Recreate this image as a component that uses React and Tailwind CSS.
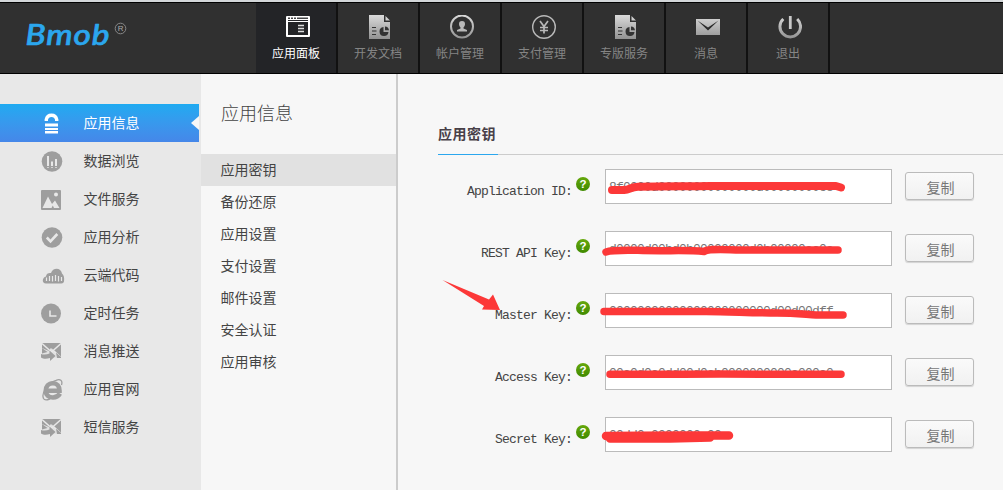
import React from "react";

const CJK = "font-['Liberation_Sans','Noto_Sans_CJK_SC',sans-serif]";

function MetalDefs() {
  return (
    <svg width="0" height="0" className="absolute">
      <defs>
        <linearGradient id="metal" x1="0" y1="0" x2="0" y2="24" gradientUnits="userSpaceOnUse">
          <stop offset="0" stopColor="#dadada" />
          <stop offset="1" stopColor="#929292" />
        </linearGradient>
        <linearGradient id="help" x1="0" y1="0" x2="0" y2="1">
          <stop offset="0" stopColor="#66a80c" />
          <stop offset="1" stopColor="#3f8a00" />
        </linearGradient>
      </defs>
    </svg>
  );
}

const navIcons = {
  panel: (
    <g>
      <path fill="#fff" fillRule="evenodd" d="M1 1H23Q24 1 24 2V21Q24 22 23 22H1Q0 22 0 21V2Q0 1 1 1ZM2 7V20H22V7Z" />
      <path stroke="#232427" strokeWidth="1" d="M2 5.5H22" />
      <path fill="#232427" d="M2 2.500H4V4H2ZM5 2.500H7V4H5ZM8 2.500H10V4H8ZM11 2.500H22V4H11Z" opacity=".85" />
      <path stroke="#ddd" strokeWidth="1.5" d="M12 10.5H18M12 13.5H18M12 16.5H18" />
    </g>
  ),
  doc: (
    <g>
      <path fill="url(#metal)" d="M1 0H16V7H22V24H1Z" />
      <path fill="url(#metal)" d="M17.5 1L22 5.500H17.500Z" />
      <path stroke="#333" strokeWidth="1.2" d="M4 12.5H8M4 16H8.500M4 19.500H8" />
      <path fill="#333" d="M15.500 12A4.500 4.500 0 1 0 20.500 17H15.500Z" />
      <path fill="#333" d="M17 11.500A4.300 4.300 0 0 1 21 15.200H17Z" />
    </g>
  ),
  user: (
    <g>
      <circle cx="12" cy="11.500" r="11" fill="none" stroke="url(#metal)" strokeWidth="2" />
      <path fill="#b8b8b8" d="M12 6C14.200 6 15 7.300 15 9C15 10.500 14.300 11.500 13.500 12.500V13.500L17 15V16.500H7V15L10.500 13.500V12.500C9.700 11.500 9 10.500 9 9C9 7.300 9.800 6 12 6Z" />
    </g>
  ),
  yen: (
    <g fill="none" stroke="#b9b9b9">
      <circle cx="12" cy="12" r="11.300" strokeWidth="1.4" />
      <path strokeWidth="1.700" d="M8 6L12 11.500L16 6M12 11V18.500M8 12.500H16M8 15.500H16" />
    </g>
  ),
  mail: (
    <g>
      <path fill="url(#metal)" d="M0 4H24V20H0Z" />
      <path fill="#2b2b2b" d="M1.500 5.500L12 12.500L22.500 5.500L12 15.500Z" />
    </g>
  ),
  power: (
    <g fill="none" stroke="url(#metal)">
      <path strokeWidth="3" d="M5.300 4A10.300 10.300 0 1 0 19.200 4" />
      <path stroke="#c9c9c9" strokeWidth="2.800" d="M12.300 1V14" />
    </g>
  ),
};

const nav = [
  ["panel", "应用面板"],
  ["doc", "开发文档"],
  ["user", "帐户管理"],
  ["yen", "支付管理"],
  ["doc", "专版服务"],
  ["mail", "消息"],
  ["power", "退出"],
];

const mailSend = (
  <g>
    <path fill="#9e9e9e" d="M2 3H21V18H2Z" />
    <path fill="none" stroke="#e8e8e8" strokeWidth="1.500" d="M2 3.500L11.500 12L21 3.500M14 11L20.500 17" />
    <path fill="#e8e8e8" d="M0 8H2L10 11.500V8.500L12 8.500L17.500 15L21 18.500V24H0Z" opacity=".9" />
    <path fill="#9e9e9e" d="M2 8L7.500 12L2 13.500ZM16 12.500L21 17V18H17Z" />
    <path fill="#9e9e9e" d="M1 14C4 15 7 14.500 9.500 13.500V10.500L15.500 16L10 21V18C6.500 19.300 3 19 1 17.500Z" />
  </g>
);

const sideIcons = {
  lock: (
    <g>
      <path fill="none" stroke="#fff" strokeWidth="3.400" d="M6.300 9V7.500A5.300 5.300 0 0 1 16.700 7.500V9" />
      <path fill="#fff" d="M5 11.500H18V14.500H5ZM5 16H18V18H5ZM5 19H18V21.500H5Z" />
    </g>
  ),
  chart: (
    <g>
      <circle cx="12" cy="11.500" r="10.300" fill="#9e9e9e" />
      <path stroke="#e8e8e8" strokeWidth="2" d="M8 6V16M12 11.500V16M16 9V16" />
      <path stroke="#d0d0d0" strokeWidth="1" d="M7 17.500H9M11 17.500H13M15 17.500H17" />
    </g>
  ),
  image: (
    <g>
      <rect x="1" y="2" width="20" height="20" rx="1" fill="#9e9e9e" />
      <path fill="#e8e8e8" d="M2.500 20L8 8.500L12 16L15 12.500L19.500 20H14L12.800 17.500L11.500 20Z" />
      <circle cx="16" cy="6.500" r="2" fill="#e8e8e8" />
    </g>
  ),
  check: (
    <g>
      <circle cx="12" cy="11.500" r="10.300" fill="#9e9e9e" />
      <path fill="none" stroke="#e8e8e8" strokeWidth="2.600" d="M6.800 11.500L10.500 15.300L17.300 8" />
    </g>
  ),
  cloud: (
    <g>
      <path fill="#9e9e9e" d="M6 19.500C1.500 19.500 2 13.500 6 12.500C6 9.500 9 8.500 11 9C12.500 3.500 21 3 22 9.500C24 11 24.500 14 24 17.500Q23.500 19.500 21.500 19.500Z" />
      <path stroke="#e8e8e8" strokeWidth="1.200" d="M6.500 13.500V17M9.500 12V17M12.500 12V17.500M15.500 11V17M18.500 12V17.500M21.500 13V17" />
    </g>
  ),
  clock: (
    <g>
      <circle cx="11" cy="11.500" r="10" fill="#9e9e9e" />
      <path fill="none" stroke="#e8e8e8" strokeWidth="1.600" d="M10 8.500V14H16.500" />
    </g>
  ),
  send: mailSend,
  ie: (
    <g>
      <path fill="none" stroke="#9e9e9e" strokeWidth="4.600" d="M6 12.800H19.500C19.500 8 17 5.200 13 5.200C8.500 5.200 5.800 8.500 5.800 12.800C5.800 17.200 8.800 19.500 13 19.500C16 19.500 18.500 18 20 15.500" />
      <path fill="none" stroke="#9e9e9e" strokeWidth="1.300" d="M21.500 7C23 2 20 .8 16 2.300C8 5 1 15 3.500 20.500C4.500 22.500 7.500 22 10 20.800" />
    </g>
  ),
};

const side = [
  ["lock", "应用信息"],
  ["chart", "数据浏览"],
  ["image", "文件服务"],
  ["check", "应用分析"],
  ["cloud", "云端代码"],
  ["clock", "定时任务"],
  ["send", "消息推送"],
  ["ie", "应用官网"],
  ["send", "短信服务"],
];

const submenu = ["应用密钥", "备份还原", "应用设置", "支付设置", "邮件设置", "安全认证", "应用审核"];

/* Marker strokes are in the coordinates of the 300x36 field overlay. */
const fields = [
  { label: "Application ID:", value: "8f0000d00000000000000d00000000c8", w: 8, d: "M12 21H24C30 20.500 31 18 38 17.800C64 17 90 17.500 110 17H236L241 18.500" },
  { label: "REST API Key:", value: "d0000d00bd0b00000000d0b00000ac0a", w: 7.500, d: "M6 21C12 19 20 19.500 38 19.300C65 20.500 85 18.500 104 20.500C109 17.500 120 18.500 140 19H238" },
  { label: "Master Key:", value: "00000000000000000000000d00d00dff", w: 7.500, d: "M4 18.500H106C130 18.500 150 20 177 20C195 20 206 21.500 216 22H243" },
  { label: "Access Key:", value: "00a0d0a0dd00d0ab0000000000a000a0", w: 7.500, d: "M10 19.300C70 19.500 120 18.700 160 19.300H241" },
  { label: "Secret Key:", value: "00dd0a0000000a00", w: 8.500, d: "M6 19C40 18.500 60 18.500 80 18.500L129 18.500M10 21.500L70 21.500L110 20.500" },
];

function Header() {
  return (
    <header className="flex h-[72px] shrink-0 border-y border-black bg-[#303030]">
      <svg className="shrink-0" width="256" height="70" viewBox="0 0 256 70">
        <text
          x="25.500"
          y="41.500"
          textLength="85"
          lengthAdjust="spacingAndGlyphs"
          fontFamily="Lato"
          fontStyle="italic"
          fontWeight="500"
          fontSize="29.500"
          letterSpacing="0.800"
          fill="#2ba7ee"
          stroke="#2ba7ee"
          strokeWidth="0.700"
          strokeLinejoin="round"
        >
          Bmob
        </text>
        <circle cx="120.500" cy="25.500" r="5.300" fill="none" stroke="#888" strokeWidth="1" />
        <text x="120.600" y="28.400" textAnchor="middle" fontFamily="Liberation Sans" fontSize="8" fill="#aaa">R</text>
      </svg>
      {nav.map(([icon, text], i) => (
        <div
          key={i}
          className={
            "flex w-[82px] shrink-0 flex-col items-center border-r-2 border-[#111] pt-[12px] text-xs " +
            (i === 0 ? "bg-[#232427] text-white" : "text-[#858585]")
          }
        >
          <svg width="24" height="25" viewBox="0 0 24 25" className="ml-[4px]">{navIcons[icon]}</svg>
          <span className="mt-[5px] leading-[18px]">{text}</span>
        </div>
      ))}
    </header>
  );
}

function Sidebar() {
  return (
    <nav className="w-[201px] shrink-0 bg-[#e8e8e8] pt-[30px] text-sm text-[#444]">
      {side.map(([icon, text], i) => (
        <div
          key={i}
          className={
            "flex h-[38px] w-[199px] items-center pl-10 " +
            (i === 0 ? "bg-linear-to-b from-[#1eaaf1] to-[#4587e9] text-white" : "")
          }
        >
          <svg width="25" height="24" viewBox="0 0 25 24" className="mt-px">{sideIcons[icon]}</svg>
          <span className="ml-[18.5px]">{text}</span>
          {i === 0 && (
            <svg className="ml-auto" width="8" height="14" viewBox="0 0 8 14">
              <path fill="#f7f7f7" d="M8 0V14L0 7Z" />
            </svg>
          )}
        </div>
      ))}
    </nav>
  );
}

function HelpIcon() {
  return (
    <svg width="14" height="14" viewBox="0 0 14 14" className="ml-[4px] mt-[8px] shrink-0">
      <circle cx="7" cy="7" r="7" fill="url(#help)" />
      <text x="7" y="11" textAnchor="middle" fontFamily="Liberation Sans" fontWeight="700" fontSize="11.500" fill="#fff">?</text>
    </svg>
  );
}

export default function App() {
  return (
    <div className={"flex h-[490px] w-[1003px] flex-col overflow-hidden bg-[#f7f7f7] " + CJK}>
      <MetalDefs />
      <div className="h-[2px] shrink-0 bg-[#d3d7d9]" />
      <Header />
      <div className="flex min-h-0 flex-1">
        <Sidebar />
        <aside className="w-[197px] shrink-0 border-r-2 border-[#ccc] text-sm text-[#444]">
          <h1 className="h-20 pl-5 pt-[27px] text-lg leading-[26px] font-light text-[#444]">应用信息</h1>
          {submenu.map((t, i) => (
            <div key={t} className={"h-8 pl-[19.5px] leading-8 " + (i === 0 ? "bg-[#e1e1e1]" : "")}>{t}</div>
          ))}
        </aside>
        <main className="relative flex-1 pl-10 pt-[45px]">
          <div className="flex h-9 border-b border-[#ccc]">
            <h2 className="-mb-px w-[60px] border-b border-[#2ba7ee] text-sm leading-[30px] font-bold tracking-[0.5px] whitespace-nowrap text-[#484048]">应用密钥</h2>
          </div>
          <div className="flex flex-col gap-[27px] pt-[14px]">
            {fields.map((f) => (
              <div key={f.label} className="flex h-[35px]">
                <span className="w-[134px] shrink-0 pt-[11px] text-right font-['Liberation_Mono',monospace] text-[13px] leading-[23px] tracking-[-0.8px] whitespace-pre text-[#444]">{f.label}</span>
                <HelpIcon />
                <div className="relative ml-[15px] w-[287px] shrink-0 border border-[#bbb] bg-white pl-[3px] font-['Liberation_Mono',monospace] text-[13px] leading-[36px] tracking-[-0.8px] text-[#777]">
                  {f.value}
                  <svg className="absolute -top-px -left-[6px] overflow-visible" width="300" height="36" viewBox="0 0 300 36">
                    <path d={f.d} fill="none" stroke="#fc3838" strokeWidth={f.w} strokeLinecap="round" strokeLinejoin="round" />
                  </svg>
                </div>
                <button className="mt-[3px] ml-[13px] h-7 w-[69px] rounded-[3px] border border-[#bbb] bg-linear-to-b from-[#fafafa] to-[#f1f1f1] pt-[3px] pl-[2px] text-sm leading-6 text-[#777] shadow-[0_1px_1px_rgba(0,0,0,0.15)]">复制</button>
              </div>
            ))}
          </div>
          <svg className="absolute top-[204px] left-[44px]" width="62" height="38" viewBox="0 0 62 38">
            <path fill="#fc3838" d="M.5 2L47 21.500L51 16.500L58 32L40 31.500L42 28Z" />
          </svg>
        </main>
      </div>
    </div>
  );
}
